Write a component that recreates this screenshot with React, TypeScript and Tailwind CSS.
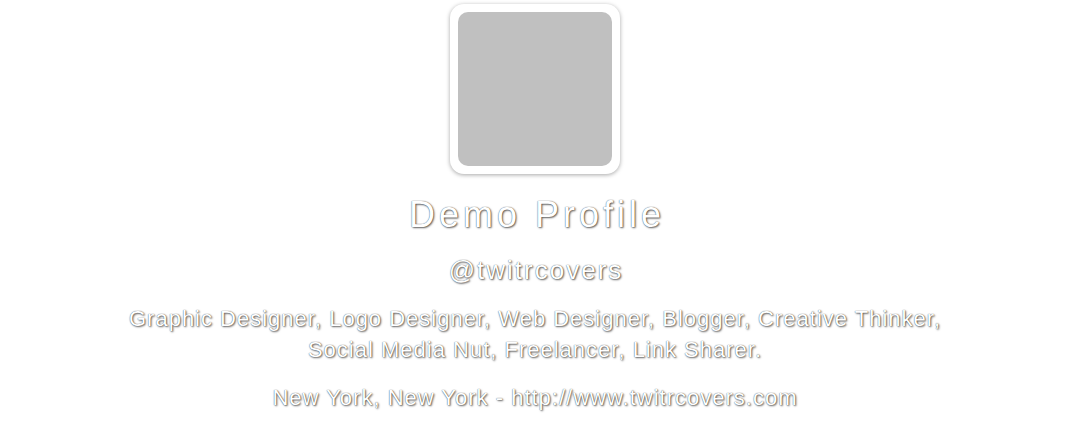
import React from 'react';

const profile = {
  name: 'Demo Profile',
  handle: '@twitrcovers',
  bio: ['Graphic Designer, Logo Designer, Web Designer, Blogger, Creative Thinker,', 'Social Media Nut, Freelancer, Link Sharer.'],
  location: 'New York, New York',
  url: 'http://www.twitrcovers.com',
};

export default function App() {
  return (
    <div className="min-h-screen w-full bg-white font-['Liberation_Sans',Arial,sans-serif] text-white [text-shadow:0_0_1px_rgba(0,0,0,0.75),1px_1px_2px_rgba(0,0,0,0.6)]">
      <div className="flex flex-col items-center pt-1">
        {/* Avatar */}
        <div className="w-[170px] h-[170px] rounded-[14px] bg-white p-2 shadow-[0_1px_4px_rgba(0,0,0,0.35)]">
          <div className="w-full h-full rounded-[10px] bg-[#c0c0c0]"></div>
        </div>

        <h1 className="mt-[21px] pl-[4px] text-[36px] leading-[40px] tracking-[4px]">{profile.name}</h1>
        <div className="mt-[20px] pl-[2px] text-[26px] leading-[30px] tracking-[2px]">{profile.handle}</div>
        <p className="mt-[18px] text-[22px] leading-[31px] tracking-[1px] text-center">
          {profile.bio[0]}
          <br />
          {profile.bio[1]}
        </p>
        <div className="mt-[18px] text-[22px] leading-[30px] tracking-[1px]">
          {profile.location} - {profile.url}
        </div>
      </div>
    </div>
  );
}
